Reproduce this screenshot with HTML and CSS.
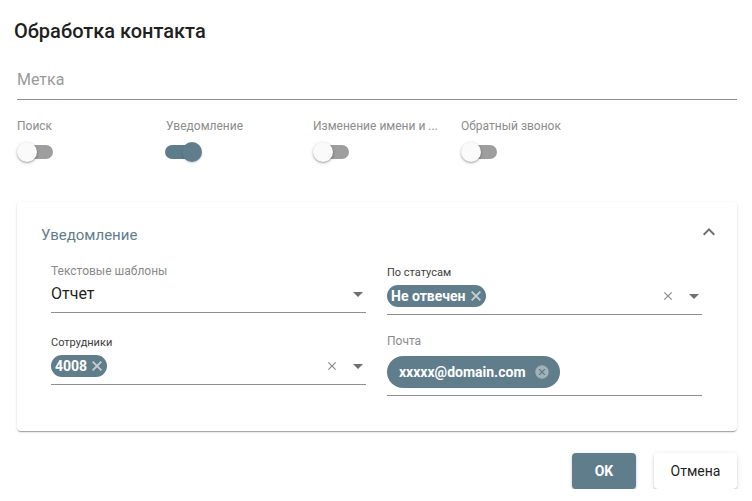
FILE: index.html
```html
<!DOCTYPE html>
<html lang="ru">
<head>
<meta charset="utf-8">
<title>Обработка контакта</title>
<link rel="stylesheet" href="styles.css">
</head>
<body>
<div class="dialog">
  <h2 class="title">Обработка контакта</h2>

  <div class="text-field">Метка</div>

  <div class="switches">
    <div class="sw-item">
      <div class="sw-label">Поиск</div>
      <div class="switch"><span class="track"></span><span class="knob"></span></div>
    </div>
    <div class="sw-item">
      <div class="sw-label">Уведомление</div>
      <div class="switch on"><span class="track"></span><span class="knob"></span></div>
    </div>
    <div class="sw-item">
      <div class="sw-label">Изменение имени и ...</div>
      <div class="switch"><span class="track"></span><span class="knob"></span></div>
    </div>
    <div class="sw-item">
      <div class="sw-label">Обратный звонок</div>
      <div class="switch"><span class="track"></span><span class="knob"></span></div>
    </div>
  </div>

  <section class="card">
    <div class="card-head">
      <span class="card-title">Уведомление</span>
      <svg class="chevron" viewBox="0 0 24 24" width="24" height="24"><path d="M12 8l-6 6 1.41 1.41L12 10.83l4.59 4.58L18 14z"/></svg>
    </div>
    <div class="fields">
      <div class="field f-select">
        <div class="lbl">Текстовые шаблоны</div>
        <div class="row">
          <span class="value">Отчет</span>
          <svg class="arrow" viewBox="0 0 24 24" width="24" height="24"><path d="M7 10l5 5 5-5z"/></svg>
        </div>
      </div>
      <div class="field f-chips">
        <div class="lbl small">По статусам</div>
        <div class="row">
          <span class="chip">Не отвечен<svg class="chip-x" viewBox="0 0 24 24" width="16" height="16"><path d="M19 6.41L17.59 5 12 10.59 6.41 5 5 6.41 10.59 12 5 17.59 6.41 19 12 13.41 17.59 19 19 17.59 13.41 12z"/></svg></span>
          <span class="spacer"></span>
          <svg class="clear" viewBox="0 0 24 24" width="14" height="14"><path d="M19 6.41L17.59 5 12 10.59 6.41 5 5 6.41 10.59 12 5 17.59 6.41 19 12 13.41 17.59 19 19 17.59 13.41 12z"/></svg>
          <svg class="arrow" viewBox="0 0 24 24" width="24" height="24"><path d="M7 10l5 5 5-5z"/></svg>
        </div>
      </div>
      <div class="field f-chips second">
        <div class="lbl small">Сотрудники</div>
        <div class="row">
          <span class="chip">4008<svg class="chip-x" viewBox="0 0 24 24" width="16" height="16"><path d="M19 6.41L17.59 5 12 10.59 6.41 5 5 6.41 10.59 12 5 17.59 6.41 19 12 13.41 17.59 19 19 17.59 13.41 12z"/></svg></span>
          <span class="spacer"></span>
          <svg class="clear" viewBox="0 0 24 24" width="14" height="14"><path d="M19 6.41L17.59 5 12 10.59 6.41 5 5 6.41 10.59 12 5 17.59 6.41 19 12 13.41 17.59 19 19 17.59 13.41 12z"/></svg>
          <svg class="arrow" viewBox="0 0 24 24" width="24" height="24"><path d="M7 10l5 5 5-5z"/></svg>
        </div>
      </div>
      <div class="field f-mail">
        <div class="lbl">Почта</div>
        <div class="row">
          <span class="chip big">xxxxx@domain.com<svg class="cancel" viewBox="0 0 24 24" width="16" height="16"><path d="M12 2C6.47 2 2 6.470 2 12s4.47 10 10 10 10-4.47 10-10S17.53 2 12 2zm5 13.59L15.59 17 12 13.41 8.41 17 7 15.590 10.59 12 7 8.41 8.41 7 12 10.59 15.59 7 17 8.41 13.41 12 17 15.59z"/></svg></span>
        </div>
      </div>
    </div>
  </section>

  <div class="actions">
    <button class="btn primary">OK</button>
    <button class="btn plain">Отмена</button>
  </div>
</div>
</body>
</html>
```

FILE: styles.css
```css
html, body {
  margin: 0;
  padding: 0;
  background: #ffffff;
}
body {
  font-family: Roboto, "Noto Sans", sans-serif;
  color: #212121;
}
.dialog {
  padding: 0 15px 0 17px;
}
.title {
  margin: 15px 0 0 -3px;
  font-size: 20px;
  line-height: 32px;
  font-weight: 500;
  color: #1f1f1f;
}
.text-field {
  margin-top: 21px;
  font-size: 16px;
  line-height: 24px;
  color: #9a9a9a;
  padding-bottom: 7px;
  border-bottom: 1px solid #8f8f8f;
}
.switches {
  margin-top: 17px;
  display: grid;
  grid-template-columns: 149px 147px 148px 148px;
}
.sw-label {
  font-size: 12px;
  line-height: 18px;
  color: #8c8c8c;
  white-space: nowrap;
}
.switch {
  position: relative;
  margin-top: 7px;
  width: 37px;
  height: 20px;
}
.track {
  position: absolute;
  left: 2px;
  top: 3px;
  width: 34px;
  height: 14px;
  border-radius: 7px;
  background: #9e9e9e;
}
.knob {
  position: absolute;
  left: 0;
  top: 0;
  width: 20px;
  height: 20px;
  border-radius: 50%;
  background: #fafafa;
  box-shadow: 0 1px 3px rgba(0,0,0,0.3), 0 1px 1px rgba(0,0,0,0.12);
}
.switch.on .track {
  left: -1px;
  background: #5f7c8a;
}
.switch.on .knob {
  left: 16px;
  background: #607d8b;
  box-shadow: 0 1px 2px rgba(0,0,0,0.2);
}
.card {
  margin-top: 40px;
  background: #ffffff;
  border-radius: 4px;
  box-shadow: 0 2px 1px -1px rgba(0,0,0,0.2), 0 1px 1px 0 rgba(0,0,0,0.14), 0 1px 3px 0 rgba(0,0,0,0.12);
  padding: 16px 16px 35px 24px;
}
.card-head {
  display: flex;
  justify-content: space-between;
  align-items: center;
  height: 32px;
}
.card-title {
  font-size: 15px;
  line-height: 24px;
  color: #5f7d8c;
  margin-top: 1px;
}
.chevron {
  fill: #6f6f6f;
  margin-top: -4px;
}
.fields {
  margin: 12px 19px 0 10px;
  display: grid;
  grid-template-columns: 315px 315px;
  column-gap: 21px;
  row-gap: 17px;
  align-items: start;
}
.field {
  border-bottom: 1px solid #8f8f8f;
}
.lbl {
  font-size: 12px;
  line-height: 18px;
  color: #8a8a8a;
}
.lbl.small {
  font-size: 11px;
  line-height: 16px;
  color: #3c3c3c;
  margin-top: 3px;
}
.row {
  display: flex;
  align-items: center;
}
.spacer {
  flex: 1;
}
.f-select .row {
  margin-top: 2px;
  height: 24px;
  padding-bottom: 6px;
  justify-content: space-between;
}
.value {
  font-size: 16px;
  line-height: 24px;
  color: #1f1f1f;
}
.arrow {
  fill: #6f6f6f;
  margin-right: -4px;
}
.clear {
  fill: #8a8a8a;
  margin-right: 7px;
}
.f-chips .row {
  margin-top: 4px;
  height: 22px;
  padding-bottom: 7px;
}
.chip {
  display: inline-flex;
  align-items: center;
  height: 22px;
  padding: 0 2px 0 4px;
  border-radius: 11px;
  background: #607d8b;
  color: #ffffff;
  font-size: 14px;
  font-weight: 700;
  line-height: 22px;
}
.chip-x {
  fill: #c2ccd1;
  margin-left: 2px;
  stroke: #c2ccd1;
  stroke-width: 1;
}
.f-mail .row {
  margin-top: 6px;
  padding-bottom: 7px;
}
.chip.big {
  height: 32px;
  border-radius: 16px;
  padding: 0 10px 0 12px;
}
.cancel {
  fill: #a2b1b9;
  margin-left: 8px;
}
.actions {
  margin-top: 22px;
  display: flex;
  justify-content: flex-end;
  gap: 18px;
}
.btn {
  height: 36px;
  border: none;
  border-radius: 4px;
  font-family: Roboto, "Noto Sans", sans-serif;
  font-size: 14px;
  padding: 0;
  cursor: pointer;
}
.btn.primary {
  width: 64px;
  background: #607d8b;
  color: #ffffff;
  font-weight: 700;
  box-shadow: 0 3px 1px -2px rgba(0,0,0,0.2), 0 2px 2px 0 rgba(0,0,0,0.14), 0 1px 5px 0 rgba(0,0,0,0.12);
}
.btn.plain {
  width: 83px;
  background: #ffffff;
  color: #1f1f1f;
  font-weight: 400;
  box-shadow: 0 3px 1px -2px rgba(0,0,0,0.2), 0 2px 2px 0 rgba(0,0,0,0.14), 0 1px 5px 0 rgba(0,0,0,0.12);
}
```
